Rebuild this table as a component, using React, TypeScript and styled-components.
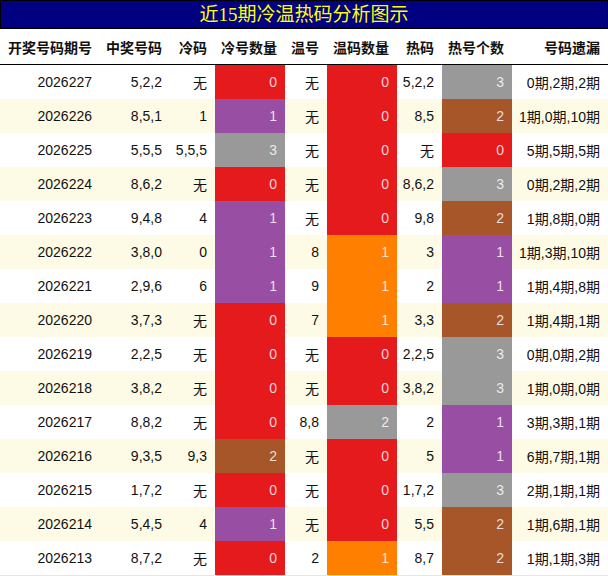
import React from "react";
import styled, { createGlobalStyle } from "styled-components";

const Global = createGlobalStyle`
  html, body { margin: 0; padding: 0; background: #fff; }
  body { font-family: "Liberation Sans", "Noto Sans CJK SC", sans-serif; }
`;

const COLS = "100px 70px 45px 70px 42px 70px 45px 70px 96px";

const Page = styled.div`
  width: 608px;
  box-sizing: border-box;
  border-bottom: 1px solid #e6e6e6;
`;

const Title = styled.div`
  height: 29px;
  box-sizing: border-box;
  background: #000080;
  border: 1px solid #000;
  color: #ffff00;
  font-family: "Liberation Serif", "Noto Sans CJK SC", serif;
  font-size: 19px;
  line-height: 27px;
  text-align: center;
`;

const HeaderRow = styled.div`
  display: grid;
  grid-template-columns: ${COLS};
  height: 36px;
  box-sizing: border-box;
  border-bottom: 1px solid #000;
`;

const HeadCell = styled.div`
  display: flex;
  align-items: center;
  justify-content: flex-end;
  padding-right: 8px;
  font-family: "Noto Sans CJK SC", sans-serif;
  font-weight: 700;
  font-size: 14px;
  color: #111;
  white-space: nowrap;
`;

const Row = styled.div<{ $alt: boolean }>`
  display: grid;
  grid-template-columns: ${COLS};
  height: 34px;
  background: ${(p) => (p.$alt ? "#fdfbe5" : "#ffffff")};
`;

const Cell = styled.div<{ $bg?: string }>`
  display: flex;
  align-items: center;
  justify-content: flex-end;
  padding-right: 8px;
  font-size: 14px;
  white-space: nowrap;
  color: ${(p) => (p.$bg ? "rgba(255,255,255,0.82)" : "#111")};
  background: ${(p) => p.$bg || "transparent"};
  font-family: "Liberation Sans", "Noto Sans CJK SC", sans-serif;
`;

const R = "#e41a1c";
const P = "#984ea3";
const O = "#ff7f00";
const B = "#a65628";
const G = "#999999";

const coldColor: Record<number, string> = { 0: R, 1: P, 2: B, 3: G };
const warmColor: Record<number, string> = { 0: R, 1: O, 2: G };
const hotColor: Record<number, string> = { 0: R, 1: P, 2: B, 3: G };

type D = [string, string, string, number, string, number, string, number, string];

const data: D[] = [
  ["2026227", "5,2,2", "无", 0, "无", 0, "5,2,2", 3, "0期,2期,2期"],
  ["2026226", "8,5,1", "1", 1, "无", 0, "8,5", 2, "1期,0期,10期"],
  ["2026225", "5,5,5", "5,5,5", 3, "无", 0, "无", 0, "5期,5期,5期"],
  ["2026224", "8,6,2", "无", 0, "无", 0, "8,6,2", 3, "0期,2期,2期"],
  ["2026223", "9,4,8", "4", 1, "无", 0, "9,8", 2, "1期,8期,0期"],
  ["2026222", "3,8,0", "0", 1, "8", 1, "3", 1, "1期,3期,10期"],
  ["2026221", "2,9,6", "6", 1, "9", 1, "2", 1, "1期,4期,8期"],
  ["2026220", "3,7,3", "无", 0, "7", 1, "3,3", 2, "1期,4期,1期"],
  ["2026219", "2,2,5", "无", 0, "无", 0, "2,2,5", 3, "0期,0期,2期"],
  ["2026218", "3,8,2", "无", 0, "无", 0, "3,8,2", 3, "1期,0期,0期"],
  ["2026217", "8,8,2", "无", 0, "8,8", 2, "2", 1, "3期,3期,1期"],
  ["2026216", "9,3,5", "9,3", 2, "无", 0, "5", 1, "6期,7期,1期"],
  ["2026215", "1,7,2", "无", 0, "无", 0, "1,7,2", 3, "2期,1期,1期"],
  ["2026214", "5,4,5", "4", 1, "无", 0, "5,5", 2, "1期,6期,1期"],
  ["2026213", "8,7,2", "无", 0, "2", 1, "8,7", 2, "1期,1期,3期"],
];

const headers = ["开奖号码期号", "中奖号码", "冷码", "冷号数量", "温号", "温码数量", "热码", "热号个数", "号码遗漏"];

export default function App() {
  return (
    <>
      <Global />
      <Page>
        <Title>近15期冷温热码分析图示</Title>
        <HeaderRow>
          {headers.map((h) => (
            <HeadCell key={h}>{h}</HeadCell>
          ))}
        </HeaderRow>
        {data.map((d, i) => (
          <Row key={d[0]} $alt={i % 2 === 1}>
            <Cell>{d[0]}</Cell>
            <Cell>{d[1]}</Cell>
            <Cell>{d[2]}</Cell>
            <Cell $bg={coldColor[d[3]]}>{d[3]}</Cell>
            <Cell>{d[4]}</Cell>
            <Cell $bg={warmColor[d[5]]}>{d[5]}</Cell>
            <Cell>{d[6]}</Cell>
            <Cell $bg={hotColor[d[7]]}>{d[7]}</Cell>
            <Cell>{d[8]}</Cell>
          </Row>
        ))}
      </Page>
    </>
  );
}
